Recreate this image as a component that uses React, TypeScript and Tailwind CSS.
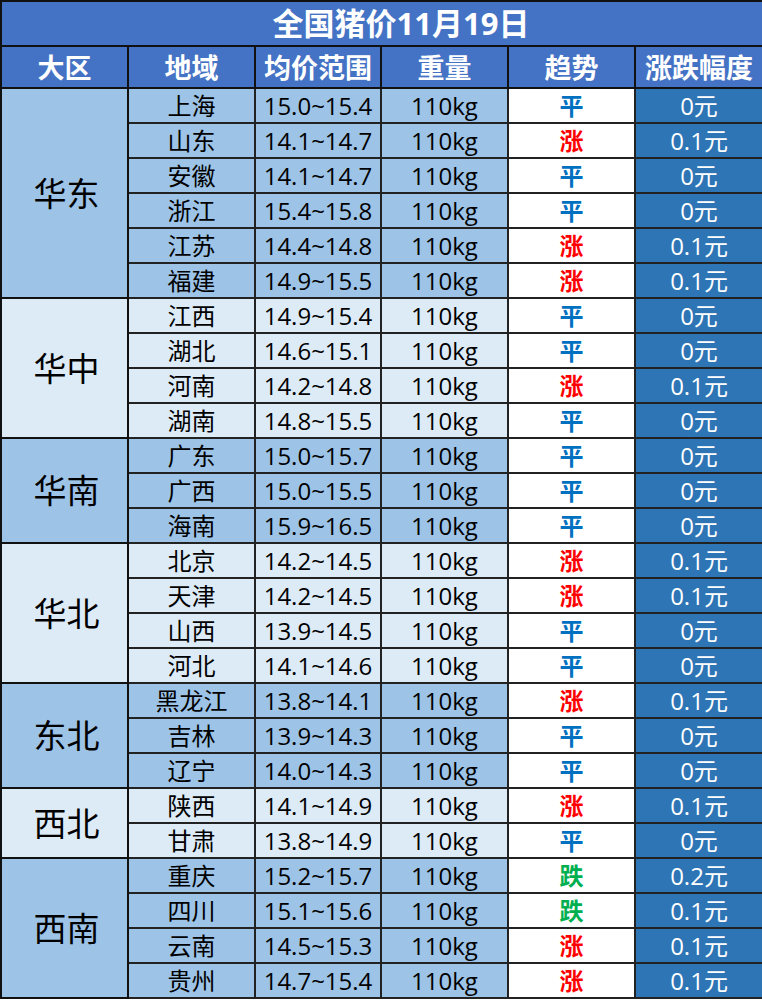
type Row = { city: string; range: string; trend: '平' | '涨' | '跌'; change: string }
type Group = { name: string; rows: Row[] }

const groups: Group[] = [
  { name: '华东', rows: [
    { city: '上海', range: '15.0~15.4', trend: '平', change: '0元' },
    { city: '山东', range: '14.1~14.7', trend: '涨', change: '0.1元' },
    { city: '安徽', range: '14.1~14.7', trend: '平', change: '0元' },
    { city: '浙江', range: '15.4~15.8', trend: '平', change: '0元' },
    { city: '江苏', range: '14.4~14.8', trend: '涨', change: '0.1元' },
    { city: '福建', range: '14.9~15.5', trend: '涨', change: '0.1元' },
  ] },
  { name: '华中', rows: [
    { city: '江西', range: '14.9~15.4', trend: '平', change: '0元' },
    { city: '湖北', range: '14.6~15.1', trend: '平', change: '0元' },
    { city: '河南', range: '14.2~14.8', trend: '涨', change: '0.1元' },
    { city: '湖南', range: '14.8~15.5', trend: '平', change: '0元' },
  ] },
  { name: '华南', rows: [
    { city: '广东', range: '15.0~15.7', trend: '平', change: '0元' },
    { city: '广西', range: '15.0~15.5', trend: '平', change: '0元' },
    { city: '海南', range: '15.9~16.5', trend: '平', change: '0元' },
  ] },
  { name: '华北', rows: [
    { city: '北京', range: '14.2~14.5', trend: '涨', change: '0.1元' },
    { city: '天津', range: '14.2~14.5', trend: '涨', change: '0.1元' },
    { city: '山西', range: '13.9~14.5', trend: '平', change: '0元' },
    { city: '河北', range: '14.1~14.6', trend: '平', change: '0元' },
  ] },
  { name: '东北', rows: [
    { city: '黑龙江', range: '13.8~14.1', trend: '涨', change: '0.1元' },
    { city: '吉林', range: '13.9~14.3', trend: '平', change: '0元' },
    { city: '辽宁', range: '14.0~14.3', trend: '平', change: '0元' },
  ] },
  { name: '西北', rows: [
    { city: '陕西', range: '14.1~14.9', trend: '涨', change: '0.1元' },
    { city: '甘肃', range: '13.8~14.9', trend: '平', change: '0元' },
  ] },
  { name: '西南', rows: [
    { city: '重庆', range: '15.2~15.7', trend: '跌', change: '0.2元' },
    { city: '四川', range: '15.1~15.6', trend: '跌', change: '0.1元' },
    { city: '云南', range: '14.5~15.3', trend: '涨', change: '0.1元' },
    { city: '贵州', range: '14.7~15.4', trend: '涨', change: '0.1元' },
  ] },
]

const trendColor = { '平': 'text-[#0070c0]', '涨': 'text-[#ff0000]', '跌': 'text-[#00b050]' }
const headers = ['大区', '地域', '均价范围', '重量', '趋势', '涨跌幅度']

export default function App() {
  return (
    <div className="w-[762px] h-[1000px] bg-white" style={{ fontFamily: '"Open Sans", "Noto Sans CJK SC", sans-serif' }}>
      <table className="w-[762px] table-fixed border-collapse border-2 border-[#111]">
        <colgroup>
          <col className="w-[127px]" /><col className="w-[127px]" /><col className="w-[126px]" />
          <col className="w-[127px]" /><col className="w-[127px]" /><col className="w-[128px]" />
        </colgroup>
        <thead>
          <tr>
            <th colSpan={6} className="h-[45px] p-0 pl-[38px] bg-[#4472c4] text-white text-[31px] font-bold leading-none border-2 border-[#111]">全国猪价11月19日</th>
          </tr>
          <tr>
            {headers.map(h => (
              <th key={h} className="h-[42px] p-0 bg-[#4472c4] text-white text-[27px] font-bold leading-none border-2 border-[#111] whitespace-nowrap">{h}</th>
            ))}
          </tr>
        </thead>
        <tbody>
          {groups.map((g, gi) => {
            const bg = gi % 2 === 0 ? 'bg-[#9dc3e6]' : 'bg-[#ddebf7]'
            return g.rows.map((r, ri) => (
              <tr key={r.city} className="h-[35px]">
                {ri === 0 && (
                  <td rowSpan={g.rows.length} className={`${bg} p-0 pl-[4px] text-center text-[33px] leading-none text-black border-2 border-[#111]`}>{g.name}</td>
                )}
                <td className={`${bg} p-0 text-center text-[24px] leading-none text-black border-2 border-[#222]`}>{r.city}</td>
                <td className={`${bg} p-0 text-center text-[24px] leading-none text-black border-2 border-[#222] whitespace-nowrap`}>{r.range}</td>
                <td className={`${bg} p-0 text-center text-[24px] leading-none text-black border-2 border-[#222]`}>110kg</td>
                <td className={`bg-white p-0 text-center text-[24px] leading-none font-bold border-2 border-[#222] ${trendColor[r.trend]}`}>{r.trend}</td>
                <td className="bg-[#2e75b6] p-0 text-center text-[24px] leading-none text-white border-2 border-[#222]">{r.change}</td>
              </tr>
            ))
          })}
        </tbody>
      </table>
    </div>
  )
}
